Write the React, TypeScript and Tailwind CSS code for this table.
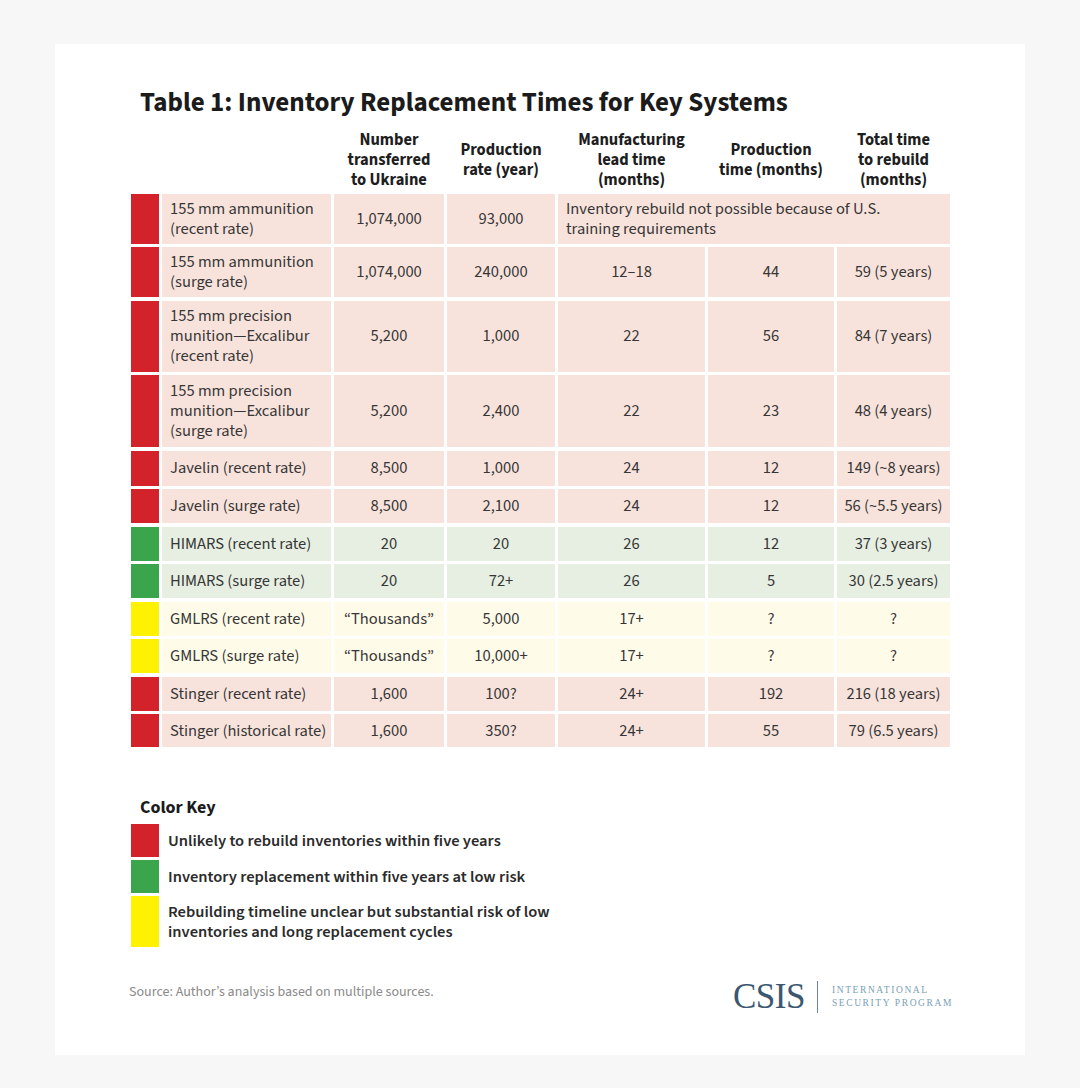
import React from "react";

type Tone = "red" | "green" | "yellow";

const swatch: Record<Tone, string> = {
  red: "bg-[#d3222a]",
  green: "bg-[#3aa54a]",
  yellow: "bg-[#fff200]",
};
const cellBg: Record<Tone, string> = {
  red: "bg-[#f8e3dc]",
  green: "bg-[#e6efe2]",
  yellow: "bg-[#fefbe9]",
};

type Row = {
  tone: Tone;
  label: string[];
  h: string;
  cells: string[];
  merged?: string[];
};

const rows: Row[] = [
  {
    tone: "red",
    label: ["155 mm ammunition", "(recent rate)"],
    h: "h-[50px]",
    cells: ["1,074,000", "93,000"],
    merged: ["Inventory rebuild not possible because of U.S.", "training requirements"],
  },
  {
    tone: "red",
    label: ["155 mm ammunition", "(surge rate)"],
    h: "h-[50px]",
    cells: ["1,074,000", "240,000", "12–18", "44", "59 (5 years)"],
  },
  {
    tone: "red",
    label: ["155 mm precision", "munition—Excalibur", "(recent rate)"],
    h: "h-[71px]",
    cells: ["5,200", "1,000", "22", "56", "84 (7 years)"],
  },
  {
    tone: "red",
    label: ["155 mm precision", "munition—Excalibur", "(surge rate)"],
    h: "h-[72px]",
    cells: ["5,200", "2,400", "22", "23", "48 (4 years)"],
  },
  { tone: "red", label: ["Javelin (recent rate)"], h: "h-[35px]", cells: ["8,500", "1,000", "24", "12", "149 (~8 years)"] },
  { tone: "red", label: ["Javelin (surge rate)"], h: "h-[34px]", cells: ["8,500", "2,100", "24", "12", "56 (~5.5 years)"] },
  { tone: "green", label: ["HIMARS (recent rate)"], h: "h-[34px]", cells: ["20", "20", "26", "12", "37 (3 years)"] },
  { tone: "green", label: ["HIMARS (surge rate)"], h: "h-[34px]", cells: ["20", "72+", "26", "5", "30 (2.5 years)"] },
  { tone: "yellow", label: ["GMLRS (recent rate)"], h: "h-[34px]", cells: ["“Thousands”", "5,000", "17+", "?", "?"] },
  { tone: "yellow", label: ["GMLRS (surge rate)"], h: "h-[34px]", cells: ["“Thousands”", "10,000+", "17+", "?", "?"] },
  { tone: "red", label: ["Stinger (recent rate)"], h: "h-[34px]", cells: ["1,600", "100?", "24+", "192", "216 (18 years)"] },
  { tone: "red", label: ["Stinger (historical rate)"], h: "h-[33px]", cells: ["1,600", "350?", "24+", "55", "79 (6.5 years)"] },
];

const headers: string[][] = [
  ["Number", "transferred", "to Ukraine"],
  ["Production", "rate (year)"],
  ["Manufacturing", "lead time", "(months)"],
  ["Production", "time (months)"],
  ["Total time", "to rebuild", "(months)"],
];

const font = { fontFamily: "'Source Sans 3', 'Source Sans Pro', Lato, 'Noto Sans', sans-serif" };

export default function App() {
  return (
    <div className="w-[1080px] h-[1088px] bg-[#f7f7f7] pt-[44px] pl-[55px]" style={font}>
      <div className="w-[970px] h-[1011px] bg-white pl-[76px] pt-[42px] flex flex-col">
        <h1 className="text-[27px] leading-[34px] font-bold text-[#1b1b1b] pl-[9px]">
          Table 1: Inventory Replacement Times for Key Systems
        </h1>
        <div className="grid grid-cols-[28px_169px_110px_108px_147px_126px_113px] gap-x-[3px] gap-y-[3.5px] mt-[10px] text-[16.5px] leading-[20px] text-[#363636]">
          {/* header */}
          <div className="h-[60px]" />
          <div />
          {headers.map((h, i) => (
            <div
              key={i}
              className="h-[60px] flex flex-col items-center justify-center text-center font-bold text-[16.5px] leading-[20px] text-[#1e1e1e]"
            >
              {h.map((l, j) => (
                <span key={j} className="whitespace-nowrap">{l}</span>
              ))}
            </div>
          ))}
          {rows.map((r, i) => (
            <React.Fragment key={i}>
              <div className={`${swatch[r.tone]} ${r.h}`} />
              <div className={`${cellBg[r.tone]} ${r.h} flex flex-col justify-center pl-[8px]`}>
                {r.label.map((l, j) => (
                  <span key={j} className="whitespace-nowrap">{l}</span>
                ))}
              </div>
              {r.cells.map((c, j) => (
                <div key={j} className={`${cellBg[r.tone]} ${r.h} flex items-center justify-center text-center whitespace-nowrap`}>
                  {c}
                </div>
              ))}
              {r.merged && (
                <div className={`${cellBg[r.tone]} ${r.h} col-span-3 flex flex-col justify-center pl-[8px]`}>
                  {r.merged.map((l, j) => (
                    <span key={j} className="whitespace-nowrap">{l}</span>
                  ))}
                </div>
              )}
            </React.Fragment>
          ))}
        </div>

        <div className="mt-[49px]">
          <div className="pl-[9px] text-[18px] leading-[24px] font-bold text-[#1b1b1b]">Color Key</div>
          <div className="flex flex-col mt-[4px] text-[16.5px] leading-[20px] font-semibold text-[#2b2b2b]">
            <div className="flex items-center gap-[9px]">
              <div className="w-[28px] h-[33px] bg-[#d3222a]" />
              <span>Unlikely to rebuild inventories within five years</span>
            </div>
            <div className="flex items-center gap-[9px] mt-[3px]">
              <div className="w-[28px] h-[33px] bg-[#3aa54a]" />
              <span>Inventory replacement within five years at low risk</span>
            </div>
            <div className="flex items-center gap-[9px] mt-[3px]">
              <div className="w-[28px] h-[51px] bg-[#fff200]" />
              <span>
                Rebuilding timeline unclear but substantial risk of low
                <br />
                inventories and long replacement cycles
              </span>
            </div>
          </div>
        </div>

        <div className="mt-[32px] flex items-center justify-between w-[822px]">
          <div className="text-[14px] text-[#8a8a8a] -ml-[2px] mb-[10px]">
            Source: Author’s analysis based on multiple sources.
          </div>
          <div className="flex items-center">
            <span
              className="text-[35px] leading-[36px] text-[#3b5870] tracking-[-0.5px]"
              style={{ fontFamily: "'Liberation Serif', 'DejaVu Serif', serif" }}
            >
              CSIS
            </span>
            <div className="w-px h-[32px] bg-[#6f8595] ml-[12px] mr-[14px]" />
            <div
              className="flex flex-col text-[9.5px] leading-[13px] tracking-[1.6px] text-[#7aa0b6]"
              style={{ fontFamily: "'Liberation Serif', 'DejaVu Serif', serif" }}
            >
              <span>INTERNATIONAL</span>
              <span>SECURITY PROGRAM</span>
            </div>
          </div>
        </div>
      </div>
    </div>
  );
}
